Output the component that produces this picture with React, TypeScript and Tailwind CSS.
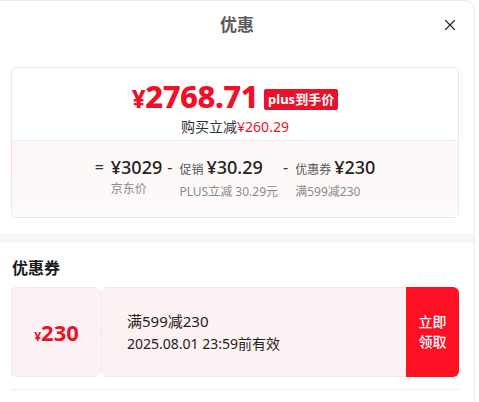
import React from 'react';
import { X } from 'lucide-react';

const font = { fontFamily: '"Noto Sans", "Noto Sans CJK SC", sans-serif' };

const parts = [
  { sign: '=', label: '', amount: '¥3029', sub: '京东价' },
  { sign: '-', label: '促销', amount: '¥30.29', sub: 'PLUS立减 30.29元' },
  { sign: '-', label: '优惠券', amount: '¥230', sub: '满599减230' },
];

export default function App(): JSX.Element {
  return (
    <div className="w-[479px] h-[402px] bg-white overflow-hidden" style={font}>
      <div className="w-[475px] h-[402px] bg-white border-r border-t border-[#ebebeb] rounded-tr-[10px]">
        <div className="relative h-[48px] flex items-center justify-center">
          <span className="text-[17px] font-bold text-[#5a5a5a]">优惠</span>
          <X className="absolute right-[15px] top-[15px] w-[18px] h-[18px] text-[#222]" strokeWidth={1.5} />
        </div>

        <div className="mx-[11px] mt-[18px] w-[448px] border border-[#f2e4e6] rounded-[5px] overflow-hidden">
          <div className="h-[72px] flex flex-col items-center pt-[11px]">
            <div className="flex items-center gap-[6px]">
              <span className="text-[#f0102a] font-extrabold text-[31px] leading-[34px] tracking-[-0.5px]">
                <span className="text-[24px]">¥</span>2768.71
              </span>
              <span className="bg-[#e8132a] text-white text-[13px] font-bold leading-[21px] px-[4px] rounded-[2px] mt-[3px]">
                plus到手价
              </span>
            </div>
            <div className="text-[14px] leading-[19px] mt-[1px] text-[#333]">
              购买立减<span className="text-[#e8132a]">¥260.29</span>
            </div>
          </div>
          <div className="h-[77px] border-t border-[#f6eaea] bg-gradient-to-b from-[#fef7f7] to-[#fdfafa] flex justify-center pt-[13px]">
            <div className="flex gap-[5px]">
              {parts.map((p, i) => (
                <div key={i} className="flex gap-[7px]">
                  <span className="text-[16px] leading-[26px] text-[#333]">{p.sign}</span>
                  <div className="flex flex-col">
                    <div className="flex items-baseline gap-[3px] leading-[26px]">
                      {p.label && <span className="text-[12px] text-[#555]">{p.label}</span>}
                      <span className="text-[18px] font-medium text-[#222]">{p.amount}</span>
                    </div>
                    <span className="text-[12px] leading-[18px] text-[#8a8a8a]">{p.sub}</span>
                  </div>
                </div>
              ))}
            </div>
          </div>
        </div>

        <div className="h-[9px] bg-[#f5f6fa] mt-[16px]" />

        <div className="px-[12px] pt-[14px] text-[16px] font-bold text-[#1a1a1a] leading-[22px]">优惠券</div>

        <div className="mx-[11px] mt-[8px] w-[448px] h-[90px] flex">
          <div className="relative w-[90px] bg-[#fdf2f3] border border-[#f7e6e8] border-r-0 rounded-l-[5px] flex items-center justify-center">
            <span className="text-[#e8132a] font-bold text-[22px] leading-none">
              <span className="text-[12px]">¥</span>230
            </span>
          </div>
          <div className="relative w-[4px] bg-[#fdf2f3] border-l border-dashed border-[#f3e2e4]">
            <span className="absolute -top-[5px] -left-[6px] w-[9px] h-[9px] rounded-full bg-white" />
            <span className="absolute -bottom-[5px] -left-[6px] w-[9px] h-[9px] rounded-full bg-white" />
          </div>
          <div className="flex-1 bg-[#fdf2f3] border-y border-[#f7e6e8] flex flex-col justify-center pl-[22px]">
            <span className="text-[15px] leading-[22px] text-[#222]">满599减230</span>
            <span className="text-[14px] leading-[20px] text-[#222] mt-[2px]">2025.08.01 23:59前有效</span>
          </div>
          <div className="w-[53px] bg-[#fd0f24] rounded-r-[6px] flex items-center justify-center">
            <span className="text-white text-[14px] font-medium leading-[20px] text-center">
              立即<br />领取
            </span>
          </div>
        </div>

        <div className="mx-[11px] mt-[12px] w-[448px] border-t border-[#efefef]" />
      </div>
    </div>
  );
}
